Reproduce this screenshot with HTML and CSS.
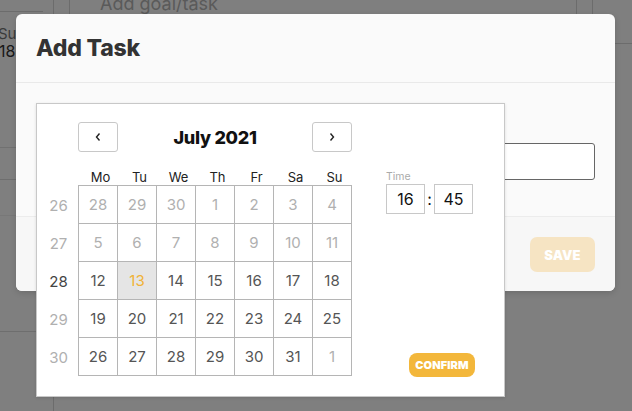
FILE: index.html
```html
<!DOCTYPE html>
<html>
<head>
<meta charset="utf-8">
<link rel="stylesheet" href="styles.css">
</head>
<body>
<div class="page">
  <div class="side">
    <div class="side-top"></div>
    <div class="side-day"><span class="dname">Sun</span><span class="dnum">18</span></div>
    <div class="side-row r1"></div>
    <div class="side-row r2"></div>
    <div class="side-row r3"></div>
  </div>
  <div class="col2"><div class="col2-top"></div></div>
  <div class="main">
    <div class="goal">Add goal/task</div>
  </div>
  <div class="colr1"><div class="colr1-top"></div></div>
  <div class="colr2"><div class="colr2-top"></div></div>
</div>

<div class="backdrop">
  <div class="modal">
    <div class="modal-head"><h1 class="title">Add Task</h1></div>
    <div class="modal-body">
      <div class="field"></div>
    </div>
    <div class="modal-foot"><button class="save">SAVE</button></div>

    <div class="picker">
      <div class="cal">
        <div class="nav">
          <button class="navbtn"><svg width="8" height="10" viewBox="0 0 8 10"><path d="M5.5 1.5 L2.5 5 L5.5 8.5" fill="none" stroke="#222" stroke-width="1.4"/></svg></button>
          <div class="month">July 2021</div>
          <button class="navbtn"><svg width="8" height="10" viewBox="0 0 8 10"><path d="M2.5 1.5 L5.5 5 L2.5 8.5" fill="none" stroke="#222" stroke-width="1.4"/></svg></button>
        </div>
        <div class="dow">
          <span></span><span>Mo</span><span>Tu</span><span>We</span><span>Th</span><span>Fr</span><span>Sa</span><span>Su</span>
        </div>
        <div class="body">
          <div class="weeks">
            <div class="wk">26</div><div class="wk">27</div><div class="wk cur">28</div><div class="wk">29</div><div class="wk">30</div>
          </div>
          <div class="grid">
            <div class="d off">28</div><div class="d off">29</div><div class="d off">30</div><div class="d off">1</div><div class="d off">2</div><div class="d off">3</div><div class="d off">4</div>
            <div class="d off">5</div><div class="d off">6</div><div class="d off">7</div><div class="d off">8</div><div class="d off">9</div><div class="d off">10</div><div class="d off">11</div>
            <div class="d">12</div><div class="d today">13</div><div class="d">14</div><div class="d">15</div><div class="d">16</div><div class="d">17</div><div class="d">18</div>
            <div class="d">19</div><div class="d">20</div><div class="d">21</div><div class="d">22</div><div class="d">23</div><div class="d">24</div><div class="d">25</div>
            <div class="d">26</div><div class="d">27</div><div class="d">28</div><div class="d">29</div><div class="d">30</div><div class="d">31</div><div class="d off">1</div>
          </div>
        </div>
      </div>
      <div class="timecol">
        <div class="tlabel">Time</div>
        <div class="trow">
          <div class="tbox">16</div><span class="colon">:</span><div class="tbox">45</div>
        </div>
        <button class="confirm">CONFIRM</button>
      </div>
    </div>
  </div>
</div>
</body>
</html>
```

FILE: styles.css
```css
* { box-sizing: border-box; }
html, body { margin: 0; padding: 0; }
body {
  width: 632px;
  height: 411px;
  overflow: hidden;
  background: #fff;
  font-family: Inter, "Noto Sans", sans-serif;
  position: relative;
}

/* underlying page */
.page {
  display: flex;
  height: 411px;
}
.side {
  width: 54px;
  border-right: 1px solid #d8d8d8;
  display: flex;
  flex-direction: column;
}
.side-top {
  height: 12px;
  margin-right: 10px;
  border-bottom: 1px solid #d8d8d8;
}
.side-day {
  display: flex;
  flex-direction: column;
  padding-top: 13px;
  height: 136px;
  border-bottom: 1px solid #e2e2e2;
}
.dname { font-size: 15px; color: #777; line-height: 17px; margin-left: -2px; }
.dnum { font-size: 16px; color: #333; line-height: 18px; margin-left: -1px; }
.side-row { border-bottom: 1px solid #dcdcdc; }
.side-row.r1 { height: 32px; }
.side-row.r2 { height: 36px; border-bottom-color: #f0f0f0; }
.side-row.r3 { height: 116px; }
.col2 { width: 16px; }
.col2-top { height: 14px; border-right: 1px solid #d8d8d8; }
.main { flex: 1; }
.goal {
  margin-top: -7px;
  margin-left: 30px;
  font-size: 18px;
  color: #b4b4b4;
}
.colr1 { width: 16px; }
.colr1-top { height: 14px; border-left: 1px solid #d8d8d8; }
.colr2 { width: 40px; }
.colr2-top { height: 44px; border-left: 1px solid #d8d8d8; border-bottom: 1px solid #d8d8d8; }

/* overlay */
.backdrop {
  position: absolute;
  inset: 0;
  background: rgba(0, 0, 0, 0.5);
}
.modal {
  position: absolute;
  left: 16px;
  top: 14px;
  width: 599px;
  height: 277px;
  background: #fafafa;
  border-radius: 6px;
  box-shadow: 0 2px 6px rgba(0, 0, 0, 0.15);
  display: flex;
  flex-direction: column;
}
.modal-head {
  height: 69px;
  border-bottom: 1px solid #e9e9e9;
  display: flex;
  align-items: center;
  padding-left: 20px;
}
.title {
  margin: 0;
  font-size: 23px;
  font-weight: 800;
  color: #333;
  letter-spacing: -0.2px;
}
.modal-body {
  height: 133px;
  padding: 60px 20px 0 20px;
}
.field {
  height: 37px;
  background: #fff;
  border: 1px solid #666;
  border-radius: 3px;
}
.modal-foot {
  flex: 1;
  border-top: 1px solid #ececec;
  background: #f7f7f7;
  border-radius: 0 0 6px 6px;
  display: flex;
  justify-content: flex-end;
  align-items: flex-start;
  padding: 20px 20px 0 0;
}
.save {
  width: 65px;
  height: 35px;
  border: none;
  border-radius: 7px;
  background: #f6e4c3;
  color: #fff;
  font-family: Inter, sans-serif;
  font-weight: 900;
  font-size: 13px;
  letter-spacing: 0.2px;
}

/* picker */
.picker {
  position: absolute;
  left: 20px;
  top: 89px;
  width: 469px;
  height: 294px;
  background: #fff;
  border: 1px solid #c8c8c8;
  box-shadow: 0 1px 3px rgba(0, 0, 0, 0.12);
  display: flex;
  gap: 34px;
  padding: 18px 29px 19px 2px;
}
.cal { width: 313px; display: flex; flex-direction: column; }
.nav {
  margin-left: 39px;
  height: 30px;
  display: flex;
  align-items: center;
  justify-content: space-between;
}
.navbtn {
  width: 40px;
  height: 30px;
  background: #fff;
  border: 1px solid #c8c8c8;
  border-radius: 3px;
  display: flex;
  align-items: center;
  justify-content: center;
  padding: 0;
}
.month {
  font-size: 18px;
  font-weight: 800;
  color: #111;
  letter-spacing: -0.3px;
}
.dow {
  margin-top: 9px;
  height: 24px;
  display: grid;
  grid-template-columns: 39px repeat(7, 39px);
  align-items: end;
  padding-left: 3px;
  padding-bottom: 0;
  font-size: 13px;
  color: #222;
  text-align: center;
}
.body { display: flex; }
.weeks { width: 39px; display: flex; flex-direction: column; padding-top: 1px; }
.wk {
  height: 38px;
  display: flex;
  align-items: center;
  justify-content: center;
  font-size: 15px;
  color: #b0b0b0;
}
.wk.cur { color: #444; }
.grid {
  display: grid;
  grid-template-columns: repeat(7, 39px);
  grid-auto-rows: 38px;
  border-left: 1px solid #b5b5b5;
  border-top: 1px solid #b5b5b5;
  width: 274px;
}
.d {
  border-right: 1px solid #b5b5b5;
  border-bottom: 1px solid #b5b5b5;
  display: flex;
  align-items: center;
  justify-content: center;
  font-size: 15px;
  color: #555;
}
.d.off { color: #b0b0b0; }
.d.today { background: #e5e5e5; color: #f0b236; }

.timecol {
  width: 89px;
  display: flex;
  flex-direction: column;
  align-items: flex-start;
  padding-top: 48px;
}
.tlabel {
  font-size: 10.5px;
  line-height: 14px;
  color: #aaa;
}
.trow { display: flex; align-items: center; }
.tbox {
  width: 39px;
  height: 30px;
  border: 1px solid #c8c8c8;
  display: flex;
  align-items: center;
  justify-content: center;
  font-size: 16px;
  color: #111;
}
.colon { width: 9px; text-align: center; font-size: 16px; color: #111; }
.confirm {
  margin-top: auto;
  align-self: flex-end;
  width: 66px;
  height: 24px;
  border: none;
  border-radius: 8px;
  background: #f3b73b;
  color: #fff;
  font-family: Inter, sans-serif;
  font-weight: 900;
  font-size: 11px;
  padding: 0;
  letter-spacing: 0.1px;
}
```
